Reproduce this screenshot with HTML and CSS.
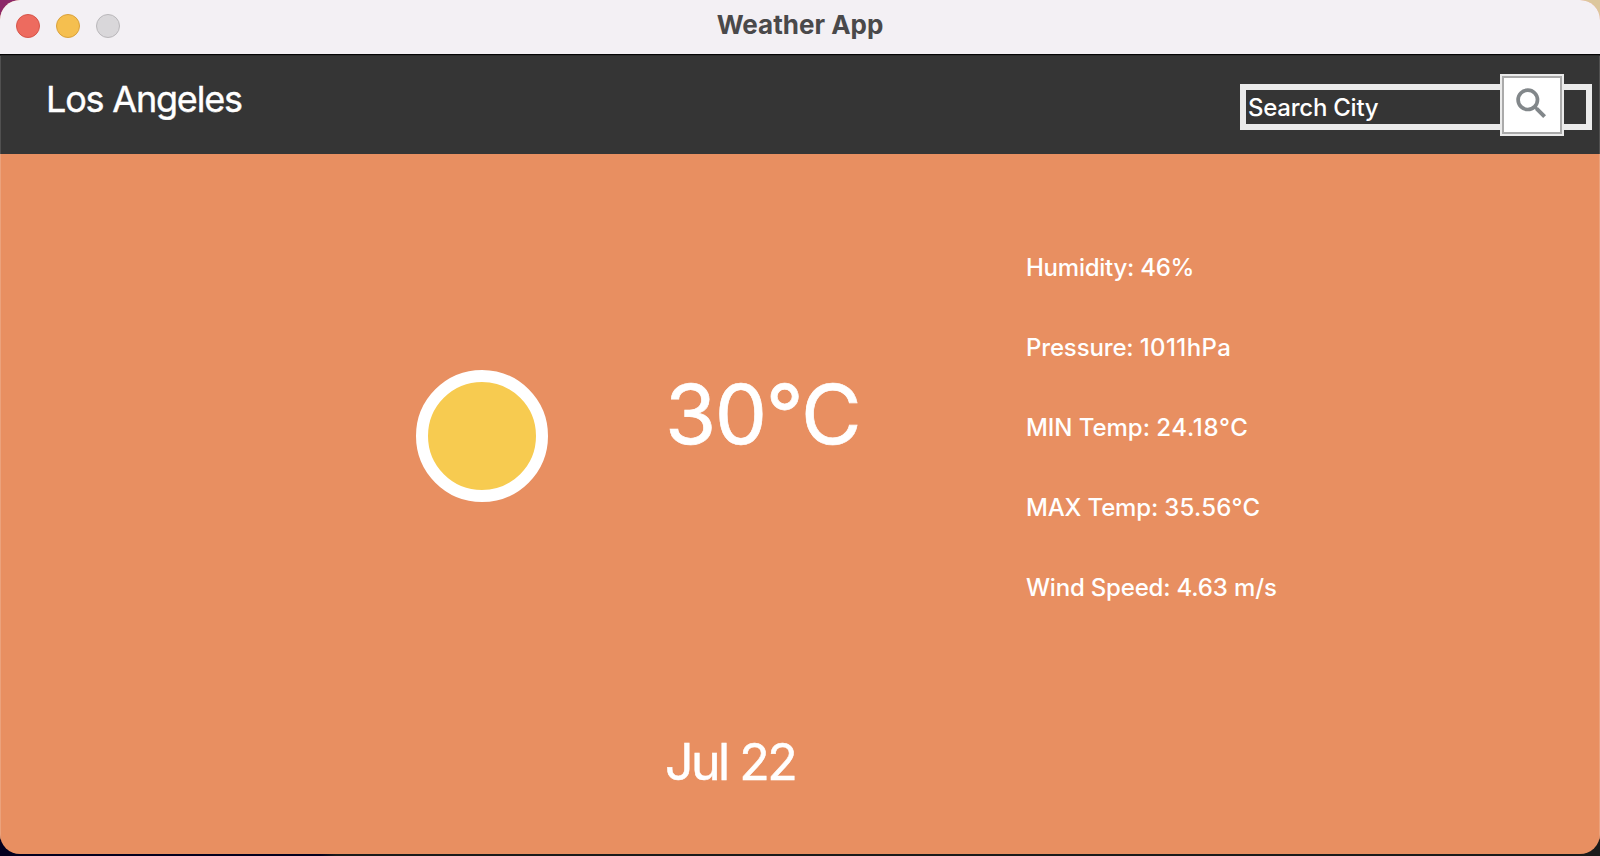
FILE: index.html
```html
<!DOCTYPE html>
<html lang="en">
<head>
<meta charset="utf-8">
<title>Weather App</title>
<link rel="stylesheet" href="styles.css">
</head>
<body>
<div class="window">
  <header class="titlebar">
    <div class="lights">
      <span class="light close"></span>
      <span class="light minimize"></span>
      <span class="light zoom"></span>
    </div>
    <h1 class="title">Weather App</h1>
  </header>
  <div class="toolbar">
    <div class="city">Los Angeles</div>
    <div class="search">
      <span class="search-text">Search City</span>
      <button class="search-button" aria-label="Search">
        <svg width="32" height="32" viewBox="0 0 32 32" fill="none" stroke="#82878a">
          <circle cx="12.8" cy="12.8" r="9.7" stroke-width="3.7"/>
          <path d="M19.6 19.6L22.5 22.5" stroke-width="3"/>
          <path d="M21.6 21.6L29.6 29.6" stroke-width="4"/>
        </svg>
      </button>
    </div>
  </div>
  <main class="weather">
    <div class="sun"></div>
    <div class="reading">
      <div class="temperature">30°C</div>
      <div class="date">Jul 22</div>
    </div>
    <div class="details">
      <div class="detail humidity">Humidity: 46%</div>
      <div class="detail pressure">Pressure: <span class="value">1011hPa</span></div>
      <div class="detail min">MIN Temp: <span class="value">24.18°C</span></div>
      <div class="detail max">MAX Temp: <span class="value">35.56°C</span></div>
      <div class="detail wind">Wind Speed: <span class="value">4.63 m/s</span></div>
    </div>
  </main>
</div>
</body>
</html>
```
FILE: styles.css
```css
* { box-sizing: border-box; }
body {
  margin: 0;
  height: 856px;
  overflow: hidden;
  font-family: Inter, "Liberation Sans", sans-serif;
  color: #fff;
  white-space: nowrap;
  background:
    linear-gradient(90deg, #8c2768, #8c2768) 0 0 / 40px 40px no-repeat,
    linear-gradient(90deg, #dcc79d, #dcc79d) 100% 0 / 40px 40px no-repeat,
    linear-gradient(90deg, #03001f 0 20%, #1b1b1b 21%);
}
.window {
  height: 854px;
  display: flex;
  flex-direction: column;
  border-radius: 20px;
  overflow: hidden;
  background: #e88f61;
}
.titlebar {
  height: 55px;
  display: grid;
  grid-template-columns: 1fr auto 1fr;
  background: #f3f0f4;
  border-bottom: 1px solid #050505;
}
.lights { display: flex; gap: 16px; padding: 14px 0 0 16px; }
.light { width: 24px; height: 24px; border-radius: 50%; border: 1px solid; }
.close { background: #ed6b5f; border-color: #d6554a; }
.minimize { background: #f5bf4f; border-color: #d9a13c; }
.zoom { background: #d9d7da; border-color: #b9b7ba; }
.title {
  margin: 9px 0 0;
  font-size: 26px;
  line-height: 32px;
  font-weight: 700;
  letter-spacing: 0;
  color: #4a494a;
}
.toolbar {
  height: 99px;
  display: flex;
  justify-content: space-between;
  padding: 28px 8px 0 46px;
  background: #353535;
  border-top: 1px solid #2b2b2b;
  box-shadow: inset 1px 0 #505050, inset -1px 0 #505050;
}
.city {
  margin-top: -1px;
  font-size: 36px;
  line-height: 32px;
  letter-spacing: -1.2px;
  -webkit-text-stroke: 0.4px #fff;
}
.search {
  position: relative;
  width: 352px;
  height: 46px;
  border: 6px solid #ebebeb;
  display: flex;
  align-items: center;
  padding-left: 2px;
}
.search-text { font-size: 24px; font-weight: 500; letter-spacing: -0.25px; }
.search-button {
  position: absolute;
  left: 256px;
  top: -14px;
  width: 60px;
  height: 58px;
  padding: 0 2px 5px 0;
  display: flex;
  align-items: center;
  justify-content: center;
  background: #fff;
  border: 2px solid #aaa;
  box-shadow: 0 0 0 2px #ebebeb;
}
.weather {
  flex: 1;
  display: grid;
  grid-template-columns: 248px 362px 1fr;
  padding-left: 416px;
  box-shadow: inset 1px 0 #eba27c, inset -1px 0 #eba27c;
}
.sun {
  width: 132px;
  height: 132px;
  margin-top: 216px;
  border-radius: 50%;
  border: 12px solid #fff;
  background: #f7cb50;
}
.reading { padding-top: 210px; }
.temperature {
  padding-left: 1px;
  font-size: 83px;
  line-height: 100px;
  letter-spacing: -1.5px;
  -webkit-text-stroke: 0.7px #fff;
}
.date {
  margin-top: 268px;
  padding-left: 1px;
  font-size: 50px;
  line-height: 60px;
  letter-spacing: -2.5px;
  -webkit-text-stroke: 0.5px #fff;
}
.details {
  display: flex;
  flex-direction: column;
  gap: 48px;
  padding-top: 98px;
}
.detail { font-size: 24px; line-height: 32px; font-weight: 500; }
.humidity { letter-spacing: -0.25px; }
.pressure { letter-spacing: -0.15px; }
.pressure .value { letter-spacing: 0.4px; }
.min { letter-spacing: -0.05px; }
.min .value { letter-spacing: 0.7px; }
.max { letter-spacing: -0.15px; }
.max .value { letter-spacing: 0.2px; }
.wind { letter-spacing: -0.2px; }
.wind .value { letter-spacing: -0.1px; }
```
